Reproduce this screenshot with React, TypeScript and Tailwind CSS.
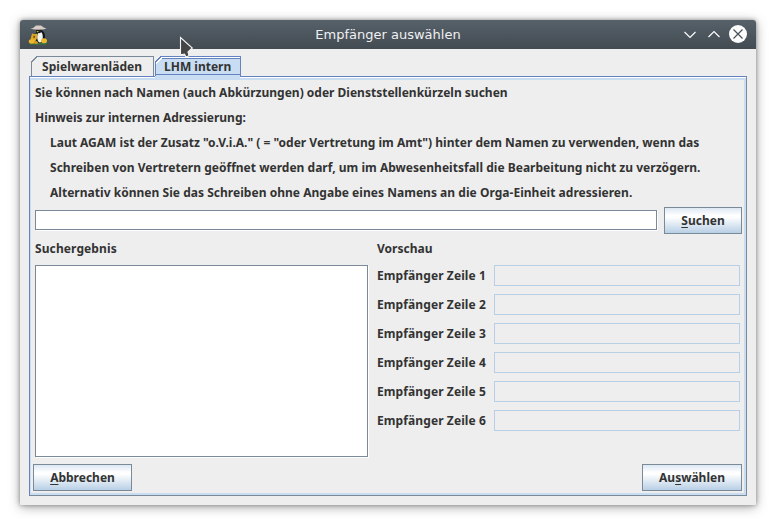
import type { ReactNode } from "react";

const rows = [1, 2, 3, 4, 5, 6];

function Button({ children, className }: { children: ReactNode; className: string }) {
  return (
    <button
      className={`h-[27px] border border-[#7a8a99] bg-[linear-gradient(#dde8f3_0%,#ffffff_30%,#ffffff_36%,#b8cfe5_100%)] text-center text-[12px] leading-[25px] font-bold ${className}`}
    >
      {children}
    </button>
  );
}

function Key({ children }: { children: string }) {
  return <span className="underline decoration-1 underline-offset-2">{children}</span>;
}

function Note({ children, className = "" }: { children: string; className?: string }) {
  return <p className={`h-[25px] w-max leading-[25px] whitespace-pre ${className}`}>{children}</p>;
}

function AppIcon() {
  return (
    <svg width="20" height="20" viewBox="0 0 20 20">
      <path d="M1 16.500 4 14l12 0 3.500 2.500-1.500 3H2z" fill="#397b3b" />
      <ellipse cx="12" cy="11.500" rx="5" ry="6.800" fill="#111618" />
      <ellipse cx="12" cy="12" rx="2.800" ry="5.600" fill="#f4f4ee" />
      <circle cx="10.800" cy="5.500" r="2.800" fill="#1b2023" />
      <path d="M8.500 6h2.500l-1.500 1.500z" fill="#e4ad29" />
      <path d="M2.500 3.800Q6 3 8 0.500h5q2 2 5.500 3.300Q10.500 5.600 2.500 3.800" fill="#d9ccc6" />
      <path d="m4 8.500 2.500.8 2.500-.8v5l-2 3-3.500 1-1-3z" fill="#e0a91c" />
      <path d="m5.500 10.500 1.800.8-.8 2-1.300-.8z" fill="#6f5012" />
      <ellipse cx="3.800" cy="16.500" rx="3" ry="2.200" fill="#efb72b" />
      <ellipse cx="8" cy="17.500" rx="2" ry="1.500" fill="#d99a1b" />
      <ellipse cx="16" cy="15.800" rx="3" ry="2.500" fill="#efb72b" />
    </svg>
  );
}

export default function App() {
  return (
    <div className="relative h-[525px] w-[776px] overflow-hidden bg-white p-5 font-['Noto_Sans','Liberation_Sans',sans-serif] text-[12px] font-bold text-[#333333]">
      <div className="flex h-[485px] w-[736px] flex-col rounded-t-[3px] rounded-b-[1px] bg-[#eeeeee] shadow-[0_2px_12px_rgba(0,0,0,0.35),0_0_4px_rgba(0,0,0,0.35)]">
        <header className="flex h-[29px] shrink-0 items-center rounded-t-[3px] bg-linear-to-b from-[#566169] to-[#434b52] pr-[9px] pl-[8px]">
          <div className="w-[67px]"><AppIcon /></div>
          <h1 className="flex-1 text-center font-['DejaVu_Sans',sans-serif] text-[13px] leading-[29px] font-normal text-[#eff0f1]">Empfänger auswählen</h1>
          <svg className="shrink-0" width="66" height="20" viewBox="0 0 66 20" fill="none" stroke="#fcfcfc" strokeWidth="1.2">
            <path d="m3.500 7 5.500 5.500 5.500-5.500M27.500 12l5.500-5.500 5.500 5.500" />
            <circle cx="57" cy="9" r="9" fill="#fcfcfc" stroke="none" />
            <path d="m52.500 4.500 9 9m0-9-9 9" stroke="#485159" />
          </svg>
        </header>
        <main className="flex flex-col pt-[7px] pl-[9px]">
          <nav className="flex h-[20px] pl-[2px]">
            <div className="relative mr-px h-[20px] w-[123px] border-t border-r border-l border-[#7a8a99] pl-[10px] leading-[20px] tracking-[0.05px]">
              <svg className="absolute -top-px -left-px" width="7" height="7" shapeRendering="crispEdges"><path d="M0 0h6L0 6z" fill="#eeeeee" /><path d="M0 6.500 6.500 0" stroke="#7a8a99" /></svg>
              Spielwarenläden
            </div>
            <div className="relative h-[20px] w-[86px] border-x border-t border-[#6382bf] bg-[#c8ddf2] pl-[8px] leading-[20px] shadow-[inset_0_1px_0_white]">
              <div className="absolute inset-x-0 top-px h-[17px] border-y border-[#6382bf]" />
              <svg className="absolute -top-px -left-px" width="8" height="8" shapeRendering="crispEdges"><path d="M0 0h6L0 6z" fill="#eeeeee" /><path d="M0 6.500 6.500 0" stroke="#6382bf" /><path d="M1 7.500 7.500 1" stroke="white" /></svg>
              LHM intern
            </div>
          </nav>
          <section className="relative flex h-[420px] w-[718px] flex-col border border-t-[#6382bf] border-r-[#7a8a99] border-b-[#7a8a99] border-l-[#6382bf] pt-[3px] shadow-[inset_0_1px_0_white,inset_1px_0_0_#c8ddf2,inset_0_3px_0_#c8ddf2,inset_-2px_-2px_0_#c8ddf2]">
            <div className="absolute -top-px left-[125px] h-[2px] w-[85px] bg-[#c8ddf2]" />
            <div className="h-[127px] pl-[5px]">
              <Note>Sie können nach Namen (auch Abkürzungen) oder Dienststellenkürzeln suchen</Note>
              <Note>Hinweis zur internen Adressierung:</Note>
              <Note className="pl-[15px] tracking-[0.005px]">{'Laut AGAM ist der Zusatz "o.V.i.A." ( = "oder Vertretung im Amt") hinter dem Namen zu verwenden, wenn das'}</Note>
              <Note className="pl-[15px] tracking-[0.02px]">Schreiben von Vertretern geöffnet werden darf, um im Abwesenheitsfall die Bearbeitung nicht zu verzögern.</Note>
              <Note className="pl-[15px] tracking-[0.03px]">Alternativ können Sie das Schreiben ohne Angabe eines Namens an die Orga-Einheit adressieren.</Note>
            </div>
            <div className="flex h-[27px] items-start pl-[5px]">
              <input aria-label="Suche" className="mt-[3px] h-[20px] w-[622px] border border-[#7a8a99] bg-white shadow-[1px_1px_0_white] outline-none" />
              <Button className="ml-[7px] w-[78px]"><Key>S</Key>uchen</Button>
            </div>
            <div className="flex h-[230px] pl-[5px]">
              <div className="w-[342px]">
                <h2 className="h-[31px] leading-[30px] tracking-[0.1px]">Suchergebnis</h2>
                <div className="h-[192px] w-[333px] border border-[#7a8a99] bg-white shadow-[1px_1px_0_white]" />
              </div>
              <div className="flex-1">
                <h2 className="h-[31px] leading-[30px]">Vorschau</h2>
                <div className="flex flex-col gap-[8px]">
                  {rows.map((n) => (
                    <label key={n} className="flex h-[21px] items-center">
                      <span className="w-[117px] leading-[21px] tracking-[0.1px]">Empfänger Zeile {n}</span>
                      <input readOnly className="h-[21px] w-[246px] border border-[#b8cfe5] bg-[#eeeeee] outline-none" />
                    </label>
                  ))}
                </div>
              </div>
            </div>
            <div className="flex justify-between pr-[4px] pl-[3px]">
              <Button className="w-[99px]"><Key>A</Key>bbrechen</Button>
              <Button className="w-[100px]">Au<Key>s</Key>wählen</Button>
            </div>
          </section>
        </main>
      </div>
      <svg className="pointer-events-none absolute top-[36px] left-[179px]" width="16" height="23" viewBox="0 0 16 23">
        <path d="M1.500 1.500v17.300l4-.8 1.500 3 3-1.300-1-3.700 4.300-4z" fill="#454545" stroke="#f5f5f5" strokeWidth="1.100" />
      </svg>
    </div>
  );
}
